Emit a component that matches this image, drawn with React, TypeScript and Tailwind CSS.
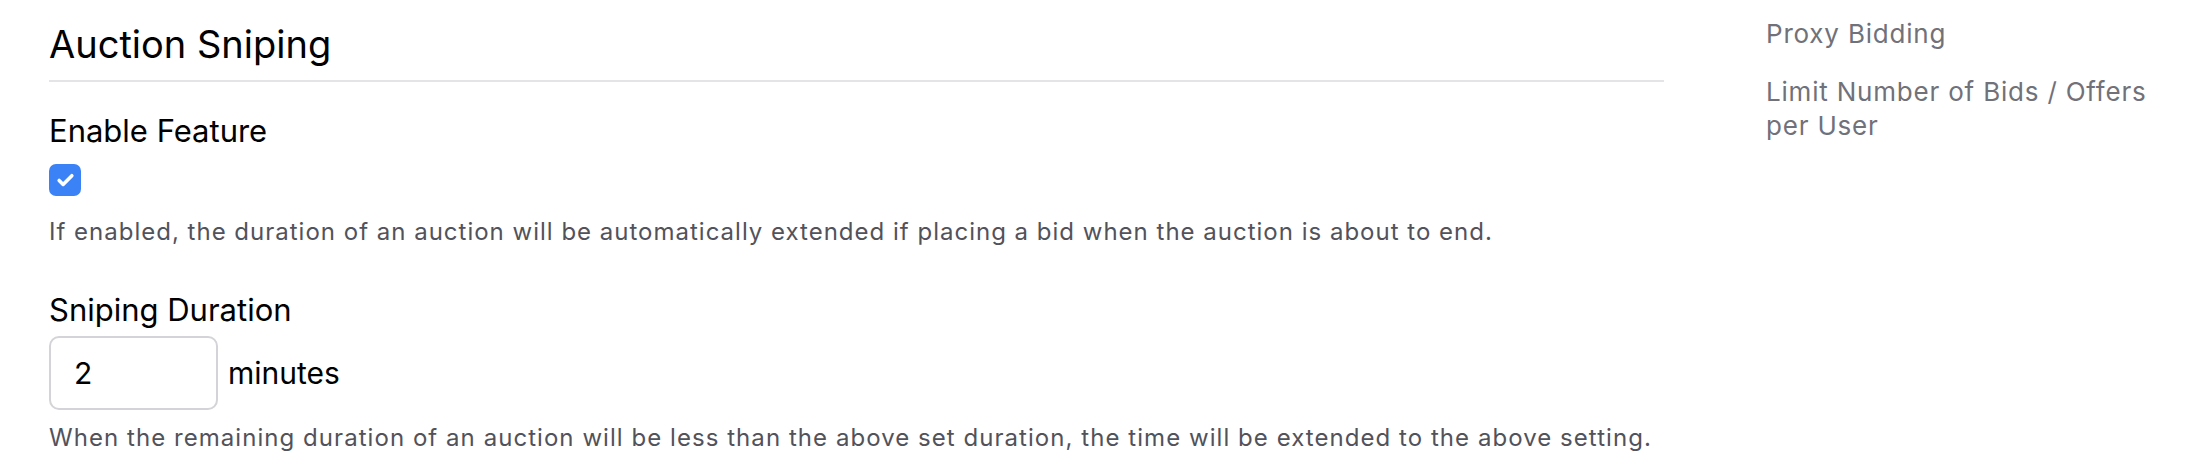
import { Check } from 'lucide-react'

const sideLinks = ['Proxy Bidding', 'Limit Number of Bids / Offers per User']

export default function App() {
  return (
    <div className="flex bg-white pl-[49px] font-['Inter',sans-serif]" style={{ minHeight: 464 }}>
      <div className="w-[1615px] shrink-0">
        <h2 className="border-b-2 border-[#e4e4e7] pt-[22px] pb-[14px] text-[38px] leading-[44px] text-black">Auction Sniping</h2>

        <div className="mt-[31px] text-[31px] leading-[36px] text-black">Enable Feature</div>
        <div className="mt-[15px] flex h-[32px] w-[32px] items-center justify-center rounded-[7px] bg-[#3b82f6]">
          <Check className="h-[19px] w-[19px] text-white" strokeWidth={4.5} />
        </div>
        <p className="mt-[21px] text-[24px] leading-[30px] tracking-[1px] text-[#52525b]">
          If enabled, the duration of an auction will be automatically extended if placing a bid when the auction is about to end.
        </p>

        <div className="mt-[45px] text-[31px] leading-[36px] text-black">Sniping Duration</div>
        <div className="mt-[8px] flex items-center gap-[10px]">
          <input
            type="text"
            defaultValue="2"
            className="h-[74px] w-[169px] rounded-[10px] border-2 border-[#d4d4d8] px-[23px] text-[30px] text-black outline-none"
          />
          <span className="text-[30px] text-black">minutes</span>
        </div>
        <p className="mt-[13px] text-[24px] leading-[30px] tracking-[1.05px] text-[#52525b]">
          When the remaining duration of an auction will be less than the above set duration, the time will be extended to the above setting.
        </p>
      </div>

      <div className="ml-[102px] flex w-[400px] flex-col gap-6 pt-[17px]">
        {sideLinks.map((l) => (
          <a key={l} className="text-[26px] leading-[34px] tracking-[0.8px] text-[#71717a]">{l}</a>
        ))}
      </div>
    </div>
  )
}
